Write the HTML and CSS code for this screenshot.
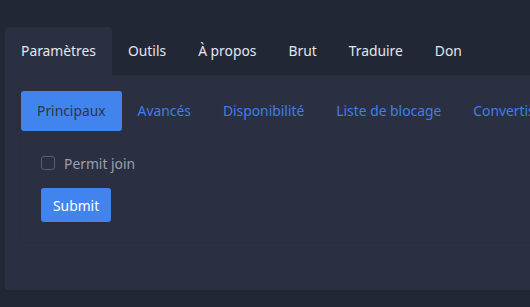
FILE: index.html
```html
<!DOCTYPE html>
<html lang="fr">
<head>
    <meta charset="UTF-8">
    <title>Paramètres</title>
    <link rel="stylesheet" href="styles.css">
</head>
<body>
    <div class="page">
        <ul class="tabs">
            <li class="tab active">Paramètres</li>
            <li class="tab">Outils</li>
            <li class="tab">À propos</li>
            <li class="tab">Brut</li>
            <li class="tab">Traduire</li>
            <li class="tab">Don</li>
        </ul>
        <div class="card">
            <ul class="pills">
                <li class="pill active">Principaux</li>
                <li class="pill">Avancés</li>
                <li class="pill">Disponibilité</li>
                <li class="pill">Liste de blocage</li>
                <li class="pill">Convertisseurs</li>
            </ul>
            <form class="panel">
                <label class="check-row">
                    <span class="check"></span>
                    Permit join
                </label>
                <button type="button" class="submit-btn">Submit</button>
            </form>
        </div>
    </div>
</body>
</html>
```

FILE: styles.css
```css
html, body {
    margin: 0;
    padding: 0;
    background: #222736;
    font-family: 'Noto Sans', 'Open Sans', sans-serif;
    font-size: 13.85px;
    overflow: hidden;
}
.page {
    padding: 27px 0 0 5px;
    width: 600px;
}
.tabs {
    list-style: none;
    margin: 0;
    padding: 0;
    display: flex;
}
.tab {
    padding: 0 16px;
    height: 48px;
    line-height: 48px;
    color: #e3e6ec;
    border-radius: 4px 4px 0 0;
}
.tab.active {
    background: #2a3042;
}
.card {
    background: #2a3042;
    border-radius: 0 0 0 4px;
    padding: 16px 16px 47px 16px;
}
.pills {
    list-style: none;
    margin: 0;
    padding: 0;
    display: flex;
    white-space: nowrap;
}
.pill {
    height: 40px;
    line-height: 40px;
    padding: 0 16px;
    color: #3f7fea;
    border-radius: 3px;
}
.pill.active {
    background: #4184ee;
    color: #2d3447;
}
.panel {
    padding: 20px;
    border-left: 1px solid rgba(0,0,0,0.06);
    border-bottom: 1px solid rgba(0,0,0,0.06);
    margin-left: -1px;
}
.check-row {
    display: flex;
    align-items: center;
    gap: 9px;
    height: 24px;
    color: #9aa0ad;
}
.check {
    width: 12px;
    height: 12px;
    border: 1px solid #5a6072;
    border-radius: 3px;
}
.submit-btn {
    margin-top: 13px;
    display: block;
    height: 34px;
    padding: 0 12px;
    background: #4184ee;
    border: none;
    border-radius: 3px;
    color: #fff;
    font-family: inherit;
    font-size: 13.85px;
}
```
